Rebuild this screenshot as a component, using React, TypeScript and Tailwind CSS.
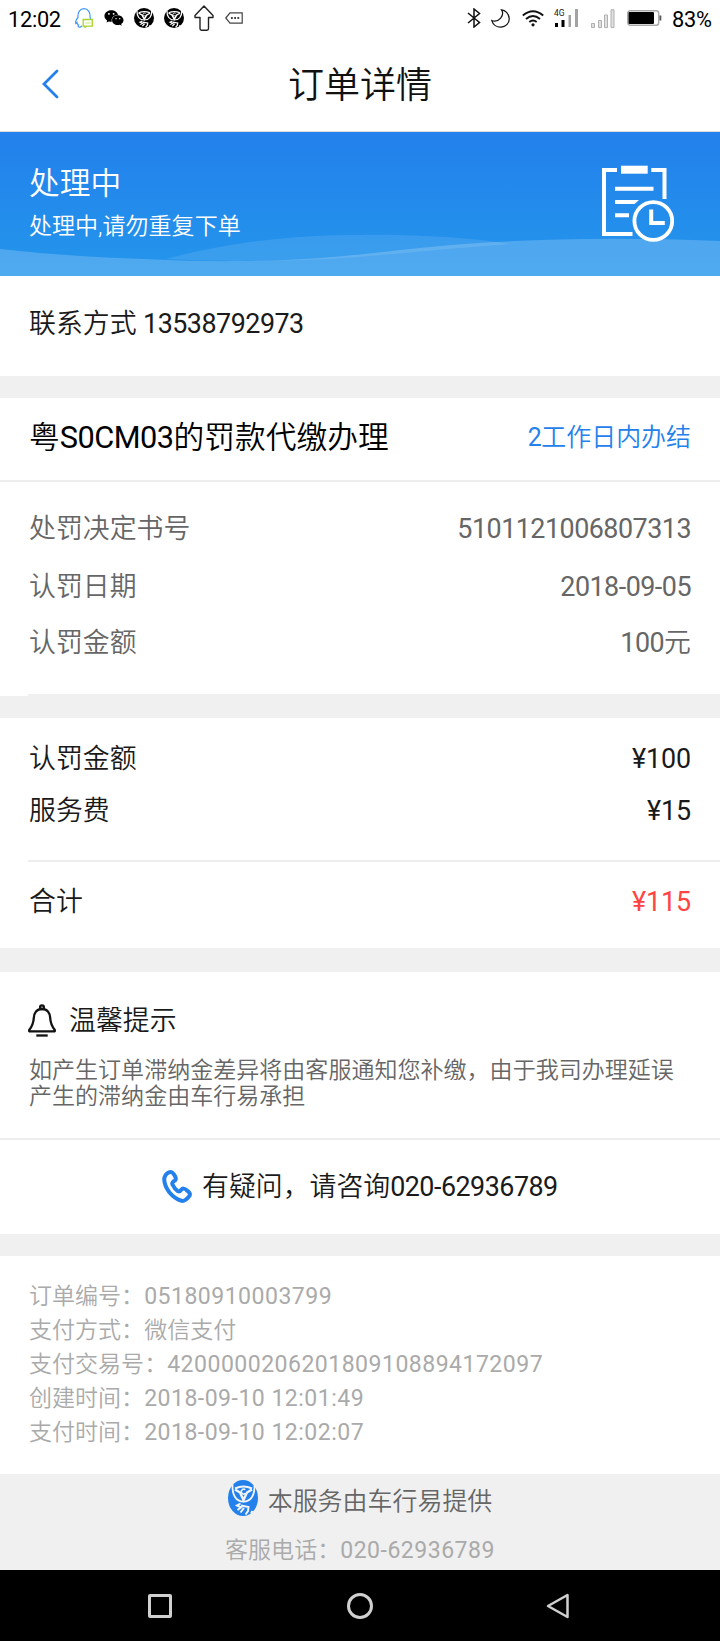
import type { ReactNode } from 'react';
import { FaWeixin } from 'react-icons/fa';

interface RowProps {
  label: string;
  children: ReactNode;
  className?: string;
}

const orderInfo = [
  { label: '订单编号：', value: '05180910003799' },
  { label: '支付方式：', value: '微信支付' },
  { label: '支付交易号：', value: '4200000206201809108894172097' },
  { label: '创建时间：', value: '2018-09-10 12:01:49' },
  { label: '支付时间：', value: '2018-09-10 12:02:07' },
];

function Num({ children }: { children: ReactNode }) {
  return <span className="font-normal tracking-[-0.5px]">{children}</span>;
}

function Price({ children }: { children: ReactNode }) {
  return <span className="font-normal tracking-[-0.1px]">{children}</span>;
}

function Row({ label, children, className = '' }: RowProps) {
  return (
    <div className={`flex items-center justify-between px-[29px] text-[26.88px] ${className}`}>
      <span>{label}</span>
      <span>{children}</span>
    </div>
  );
}

function BrandLogo({ color, mark, className }: { color: string; mark: string; className: string }) {
  return (
    <svg viewBox="0 0 30 36" preserveAspectRatio="none" className={className} fill="none" stroke={mark}>
      <ellipse cx="15" cy="18" rx="15" ry="18" fill={color} stroke="none" />
      <path d="M4.500 4.500C4 15 8 21.500 15.500 21.500S27 15 26.500 4.500" strokeWidth="1.800" />
      <path d="M7 8.500Q15.500 4.500 24 8.500" strokeWidth="2" />
      <path d="M7 9.500L12 12.500L15.500 20L19 12.500L24 9.500" strokeWidth="2.400" />
      <path d="M17.300 9.800A2.400 2.400 0 1 0 17.300 13.400" strokeWidth="1.500" />
      <path d="M12.500 23.500L9 25.500L13 27.500L9.500 30M13 25.500L20.500 27L20 31L17.500 34.500M16 28L12.500 32.500M24.500 31L23 33" strokeWidth="2" />
    </svg>
  );
}

function StatusBar() {
  return (
    <div className="flex h-9 items-center pl-2 pr-2 text-[21.8px] font-normal leading-9 text-black">
      <span className="mt-[3px] w-[55px] tracking-[-0.3px]">12:02</span>
      {/* QQ */}
      <svg className="ml-3 h-5 w-[18px]" viewBox="0 0 18 20" fill="none">
        <path d="M7 18C5 20 2 19 3.500 17C2 16 2 14.500 2 14.500L.8 15.500C0 13 1.500 11 3 9.500C2.500 4 5 .7 9 .7S15.500 4 15 9.500L16 11.500" stroke="#3d98f5" strokeWidth="1.200" />
        <path d="M8.200 11.500H17.300V18.200H11.500L10 19.400V18.200H8.200Z" stroke="#a6d52b" strokeWidth="1.300" fill="#fff" />
        <path d="M10.500 15H15.500" stroke="#a6d52b" strokeWidth="1.200" strokeDasharray="1.200 .8" />
      </svg>
      <FaWeixin className="ml-[11px] h-5 w-5" />
      <BrandLogo color="#000" mark="#fff" className="ml-[10px] h-5 w-5" />
      <BrandLogo color="#000" mark="#fff" className="ml-[10px] h-5 w-5" />
      <svg className="ml-[10px] h-[26px] w-5" viewBox="0 0 20 26" fill="none" stroke="#222" strokeWidth="1.400" strokeLinejoin="round">
        <path d="M10 1L19 10.500V12.500H14.500V23.500Q14.500 25.200 13 25.200H7.500Q6 25.200 6 23.500V12.500H1V10.500Z" />
      </svg>
      <svg className="ml-[11px] h-3 w-[18px]" viewBox="0 0 18 12" fill="none" stroke="#444" strokeWidth="1.200">
        <path d="M.8 6L5 .8H17.200V11.200H5Z" />
        <path d="M6 6H14.500" strokeWidth="1.800" strokeDasharray="1.800 1.400" />
      </svg>

      <svg className="ml-auto h-5 w-[14px]" viewBox="0 0 14 20" fill="none" stroke="#111" strokeWidth="1.500">
        <path d="M1 5L12.500 14.500L7 19V1L12.500 5.500L1 15" />
      </svg>
      <svg className="ml-[10px] h-[19px] w-[19px]" viewBox="0 0 19 19" fill="none" stroke="#111" strokeWidth="1.200">
        <path d="M10.500 .8C14 6 8 14 .8 11.500C2 16 6 18.400 10 18.200C15 17.800 18.500 14 18.200 9.500C18 4.500 14 1.200 10.500 .8Z" />
      </svg>
      <svg className="ml-3 h-[17px] w-[22px]" viewBox="0 0 22 17" fill="none" stroke="#111" strokeWidth="1.900">
        <path d="M.8 5.500Q11 -3.200 21.200 5.500M4 9Q11 3 18 9M7.300 12Q11 9 14.700 12" />
        <circle cx="11" cy="14.800" r="1.600" fill="#111" stroke="none" />
      </svg>
      <svg className="ml-[10px] h-[18px] w-[25px]" viewBox="0 0 25 18">
        <text x="0" y="7" fontSize="8.500" fill="#222" fontFamily="Roboto, sans-serif">4G</text>
        <path d="M1 14H4V18H1ZM7.500 11H10.500V18H7.500Z" fill="#000" />
        <path d="M14.500 6H17V18H14.500ZM21 0H24V18H21Z" fill="#a3a3a3" />
      </svg>
      <svg className="ml-3 h-[19px] w-6" viewBox="0 0 24 19" fill="#e0e0e0" stroke="#b0b0b0">
        <path d="M.5 14.500H3.500V18.500H.5ZM7.500 11.500H10.500V18.500H7.500ZM13.500 6H16.500V18.500H13.500ZM20 .8H23V18.500H20Z" />
      </svg>
      <svg className="ml-3 h-4 w-[35px]" viewBox="0 0 35 16">
        <rect x=".7" y=".7" width="31" height="14.600" rx="2.500" fill="#fff" stroke="#aaa" strokeWidth="1.400" />
        <rect x="1.500" y="2" width="25.500" height="12" rx="1" fill="#000" />
        <rect x="32.500" y="5.500" width="1.800" height="5" fill="#555" />
      </svg>
      <span className="ml-[10px] mt-[3px] w-[40px] tracking-[-0.3px]">83%</span>
    </div>
  );
}

function TitleBar() {
  return (
    <div className="flex h-24 items-center border-b border-[#dcdcdc] px-[42px]">
      <svg className="h-[30px] w-[18px]" viewBox="0 0 18 30" fill="none" stroke="#2481ec" strokeWidth="2.800" strokeLinecap="round">
        <path d="M15 2L2 15L15 28" />
      </svg>
      <h1 className="mr-[18px] mt-1 flex-1 text-center text-[36px] leading-[40px] text-[#111]">订单详情</h1>
    </div>
  );
}

function StatusBanner() {
  return (
    <div className="relative flex h-36 items-start justify-between bg-gradient-to-b from-[#2380ec] to-[#2496eb] pl-[29px] pr-[45px] text-white">
      <svg className="absolute inset-0 h-36 w-full" viewBox="0 0 720 144" fill="#fff">
        <path d="M165 127C240 108 300 103 360 103C420 102 480 107 510 112C450 116 390 123 330 127C280 129 220 130 165 127Z" fillOpacity=".1" />
        <path d="M0 117C60 124 130 127 200 129C290 130 340 125 400 118C500 107 600 104 720 109V144H0Z" fillOpacity=".2" />
      </svg>
      <div className="relative pt-[33px]">
        <div className="text-[30.72px] leading-[38px]">处理中</div>
        <div className="mt-[9px] text-[23.04px] leading-[30px]">处理中,请勿重复下单</div>
      </div>
      <svg className="relative mt-[33px] h-[78px] w-[74px]" viewBox="601 165 74 78" fill="none" stroke="#fff" strokeWidth="4">
        <path d="M617 170H604V234H632.500M651.300 170H664.500V199" />
        <path d="M621 165.700H647.700V173.700H621Z" fill="#fff" stroke="none" />
        <path d="M615 188.700H653.500M615 215.300H629" />
        <path d="M615 200H639L634.500 204H615Z" fill="#fff" stroke="none" />
        <circle cx="653.300" cy="221" r="18.900" strokeWidth="3.800" />
        <path d="M651.200 209.500V222.900H664.800" />
      </svg>
    </div>
  );
}

function Tips() {
  return (
    <section className="h-[168px] border-b-2 border-[#ededed] bg-white pl-7 pr-6">
      <div className="flex h-[86px] items-center pt-3">
        <svg className="h-[34px] w-7" viewBox="0 0 28 34" fill="none" stroke="#111" strokeWidth="2.300" strokeLinejoin="round">
          <circle cx="14" cy="3.200" r="1.900" />
          <path d="M14 5C8.500 5 6 9.500 5.800 14C5.500 19 4 22.500 1.200 26V27.300H26.800V26C24 22.500 22.500 19 22.200 14C22 9.500 19.500 5 14 5Z" />
          <path d="M8.300 31.500H19.700" />
        </svg>
        <span className="ml-[13px] text-[26.88px] leading-[36px]">温馨提示</span>
      </div>
      <p className="ml-px w-[660px] text-[23.04px] leading-[26px] text-[#666]">
        如产生订单滞纳金差异将由客服通知您补缴，由于我司办理延误产生的滞纳金由车行易承担
      </p>
    </section>
  );
}

function NavBar() {
  return (
    <div className="flex h-[71px] items-center bg-black pl-[148px]">
      <div className="h-6 w-6 rounded-[2px] border-[3px] border-[#d0d0d0]" />
      <div className="ml-[175px] h-[26px] w-[26px] rounded-full border-[3px] border-[#d0d0d0]" />
      <svg className="ml-[173px] h-[26px] w-6" viewBox="0 0 24 26" fill="none" stroke="#d0d0d0" strokeWidth="2.500" strokeLinejoin="round">
        <path d="M21.500 2V24L2 13Z" />
      </svg>
    </div>
  );
}

export default function App() {
  return (
    <div className="flex h-[1641px] w-[720px] flex-col overflow-hidden bg-[#f0f0f0] font-[Roboto,'Noto_Sans_CJK_SC',sans-serif] font-[350] text-[#1a1a1a]">
      <header className="bg-white">
        <StatusBar />
        <TitleBar />
      </header>
      <StatusBanner />

      {/* Contact */}
      <section className="h-[100px] bg-white px-[29px] pt-[30px] text-[26.88px] leading-[36px]">
        联系方式 <Num>13538792973</Num>
      </section>

      {/* Fine details */}
      <section className="mt-[22px] bg-white">
        <div className="flex h-[84px] items-center justify-between border-b-2 border-[#ededed] px-[29px] pb-[2px]">
          <h2 className="text-[30.72px] leading-[40px] text-black">粤<Num>S0CM03</Num>的罚款代缴办理</h2>
          <span className="text-[24.96px] leading-[36px] text-[#2481ec]"><Num>2</Num>工作日内办结</span>
        </div>
        <div className="pt-[19px] text-[#666]">
          <Row label="处罚决定书号" className="h-14"><Num>5101121006807313</Num></Row>
          <Row label="认罚日期" className="h-[60px]"><Num>2018-09-05</Num></Row>
          <Row label="认罚金额" className="h-[53px]"><Num>100</Num>元</Row>
        </div>
        <div className="ml-7 mt-6 h-[2px] bg-[#f0f0f0]" />
      </section>

      {/* Fees */}
      <section className="mt-[22px] bg-white pt-[15px]">
        <Row label="认罚金额" className="h-[52px]"><Price>¥100</Price></Row>
        <Row label="服务费" className="h-[52px]"><Price>¥15</Price></Row>
        <div className="ml-7 mt-[23px] h-[2px] bg-[#ededed]" />
        <Row label="合计" className="h-[86px] pb-[6px]">
          <span className="text-[#ff4444]"><Price>¥115</Price></span>
        </Row>
      </section>

      <div className="mt-6">
        <Tips />
        <div className="flex h-[94px] items-center bg-white pl-[162px] text-[26.88px] leading-[36px]">
          <svg className="mb-px h-[33px] w-[30px]" viewBox="0 0 30 33" fill="none" stroke="#2481ec" strokeWidth="4" strokeLinejoin="round">
            <path d="M2.200 9.500Q2.500 4.500 7 2.300Q10 1.200 12 4.500Q15 8.500 13 10.500Q9.500 12.500 10.500 14.500Q12.500 19 16 21.300Q17.500 22 19 20Q21.500 17 25 20.500Q29.500 23.500 27 26.500Q23 31.500 19.500 30.800Q13 29 7.500 22.500Q2.500 16 2.200 9.500Z" />
          </svg>
          <span className="ml-[10px]">有疑问，请咨询<Num>020-62936789</Num></span>
        </div>
      </div>

      {/* Order info */}
      <section className="mt-[22px] h-[218px] bg-white px-[29px] pt-6 text-[23.04px] leading-[34px] text-[#aaa]">
        {orderInfo.map((item) => (
          <div key={item.label} className="whitespace-nowrap">
            {item.label}
            <span className={/^\d/.test(item.value) ? 'font-normal tracking-[0.48px]' : ''}>{item.value}</span>
          </div>
        ))}
      </section>

      <footer className="flex h-24 flex-col items-center">
        <div className="flex h-[52px] items-center text-[24.96px] leading-[34px] text-[#666]">
          <BrandLogo color="#2481ec" mark="#f4f4f4" className="mb-[5px] mr-[10px] h-9 w-[30px]" />
          <span className="mt-[3px]">本服务由车行易提供</span>
        </div>
        <div className="mt-2 text-[23.04px] leading-[34px] text-[#aaa]">
          客服电话：<span className="font-normal tracking-[0.5px]">020-62936789</span>
        </div>
      </footer>
      <NavBar />
    </div>
  );
}
